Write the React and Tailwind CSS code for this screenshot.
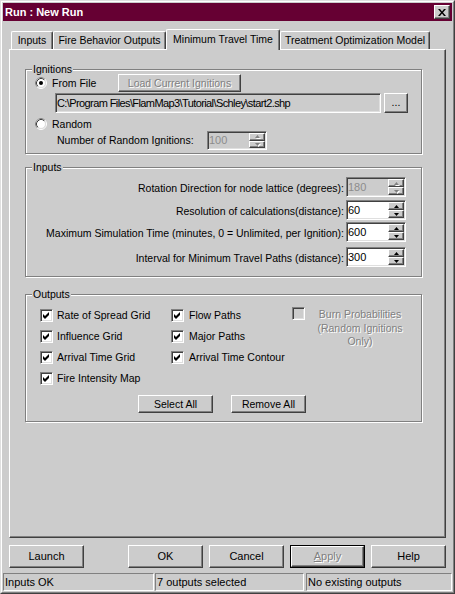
import React from 'react';

const raised =
  'border border-t-white border-l-white border-r-[#404040] border-b-[#404040] shadow-[inset_-1px_-1px_0_#808080]';
const sunken =
  'border border-t-[#808080] border-l-[#808080] border-r-white border-b-white shadow-[inset_1px_1px_0_#404040,inset_-1px_-1px_0_#dfdfdf]';
const etched = 'relative border border-[#808080] shadow-[inset_1px_1px_0_#ffffff,1px_1px_0_#ffffff]';
const embossed = 'text-[#808080] [text-shadow:1px_1px_0_#ffffff]';

const Button = ({ children, className = '', disabled }) => (
  <div className={`${raised} flex items-center justify-center shrink-0 ${disabled ? embossed : ''} ${className}`}>
    {children}
  </div>
);

const Radio = ({ checked }) => (
  <svg width="12" height="12" viewBox="0 0 12 12" className="shrink-0">
    <circle cx="6" cy="6" r="5.5" fill="none" stroke="#ffffff" />
    <path d="M2.11 9.89A5.5 5.5 0 0 1 9.89 2.11" fill="none" stroke="#808080" />
    <circle cx="6" cy="6" r="4.5" fill="#ffffff" stroke="#dfdfdf" />
    <path d="M2.82 9.18A4.5 4.5 0 0 1 9.18 2.82" fill="none" stroke="#404040" />
    {checked && <circle cx="6" cy="6" r="2" fill="#000000" />}
  </svg>
);

const Checkbox = ({ checked, disabled }) => (
  <div
    className={`${sunken} w-[13px] h-[13px] flex items-center justify-center shrink-0 ${
      disabled ? 'bg-[#cccccc]' : 'bg-white'
    }`}
  >
    {checked && (
      <svg width="7" height="7" viewBox="0 0 7 7">
        <path d="M0 2L2 4L6 0V3L2 7L0 5Z" fill="#000000" />
      </svg>
    )}
  </div>
);

const Arrow = ({ up, disabled }) => (
  <svg width="5" height="3" viewBox="0 0 5 3" className="overflow-visible">
    {disabled && <path d={up ? 'M3.5 1L6 4H1Z' : 'M1 1H6L3.5 4Z'} fill="#ffffff" />}
    <path d={up ? 'M2.5 0L5 3H0Z' : 'M0 0H5L2.5 3Z'} fill={disabled ? '#808080' : '#000000'} />
  </svg>
);

const SpinBox = ({ value, disabled, className = '' }) => (
  <div className={`${sunken} flex shrink-0 ${disabled ? 'bg-[#cccccc]' : 'bg-white'} ${className}`}>
    <div className={`flex-1 flex items-center pl-[1px] text-[11px] ${disabled ? 'text-[#8c8c8c]' : ''}`}>{value}</div>
    <div className="w-[16px] flex flex-col my-[1px] mr-[1px]">
      <div className={`${raised} flex-1 bg-[#cccccc] flex items-center justify-center`}>
        <Arrow up disabled={disabled} />
      </div>
      <div className={`${raised} flex-1 bg-[#cccccc] flex items-center justify-center`}>
        <Arrow disabled={disabled} />
      </div>
    </div>
  </div>
);

const Group = ({ title, className = '', children }) => (
  <div className={`${etched} ml-[15px] w-[397px] ${className}`}>
    <span className="absolute left-[6px] top-[-7px] px-[1px] bg-[#cccccc] leading-[13px]">{title}</span>
    {children}
  </div>
);

const Tab = ({ children, className = '', selected }) =>
  selected ? (
    <div
      className={`relative z-10 -mb-px h-[21px] bg-[#cccccc] border border-b-0 border-t-white border-l-white border-r-[#404040] shadow-[inset_-1px_0_0_#808080] rounded-t-[2px] flex items-center justify-center pb-[2px] shrink-0 whitespace-nowrap ${className}`}
    >
      {children}
    </div>
  ) : (
    <div
      className={`h-[18px] border border-b-0 border-t-white border-l-white border-r-[#404040] shadow-[inset_-1px_0_0_#808080] rounded-t-[2px] flex items-center justify-center shrink-0 whitespace-nowrap ${className}`}
    >
      {children}
    </div>
  );

const InputRow = ({ label, value, disabled, className = '' }) => (
  <div className={`flex items-center ${className}`}>
    <span className="w-[318px] text-right whitespace-nowrap pt-[2px]">{label}</span>
    <SpinBox value={value} disabled={disabled} className="ml-[2px] w-[60px] h-[20px]" />
  </div>
);

const CheckRow = ({ label, gap = 'ml-[4px]' }) => (
  <div className="h-[21px] flex items-center">
    <Checkbox checked />
    <span className={`${gap} whitespace-nowrap`}>{label}</span>
  </div>
);

const statusCell = 'border border-t-[#808080] border-l-[#808080] border-r-white border-b-white flex items-center pl-[1px] text-[11px]';

export default function App() {
  return (
    <div className="w-[455px] h-[594px] bg-[#cccccc] font-['Liberation_Sans',Arial,sans-serif] text-[10.5px] leading-[13px] text-black border border-t-[#dfdfdf] border-l-[#dfdfdf] border-r-[#404040] border-b-[#404040] select-none">
      <div className="h-full border border-t-white border-l-white border-r-[#808080] border-b-[#808080] p-[1px] flex flex-col">
        {/* Title bar */}
        <div className="h-[18px] bg-[#660033] flex items-center justify-between px-[2px] shrink-0">
          <span className="text-white font-bold text-[11px]">Run : New Run</span>
          <div className={`${raised} w-[16px] h-[14px] bg-[#cccccc] flex items-center justify-center`}>
            <svg width="8" height="7" viewBox="0 0 8 7">
              <path d="M0 0H2L4 2.4L6 0H8L5 3.5L8 7H6L4 4.6L2 7H0L3 3.5Z" fill="#000000" />
            </svg>
          </div>
        </div>

        {/* Tabs */}
        <div className="pl-[6px] pt-[8px]">
          <div className="flex items-end h-[20px] pl-[2px]">
            <Tab className="w-[42px]">Inputs</Tab>
            <Tab className="w-[113px]">Fire Behavior Outputs</Tab>
            <Tab selected className="w-[114px]">Minimum Travel Time</Tab>
            <Tab className="w-[150px]">Treatment Optimization Model</Tab>
          </div>

          <div className="w-[437px] h-[489px] border border-t-white border-l-white border-r-[#404040] border-b-[#404040] shadow-[inset_-1px_-1px_0_#808080] flex flex-col">
            {/* Ignitions */}
            <Group title="Ignitions" className="mt-[19px] h-[85px]">
              <div className="mt-[4px] h-[18px] flex items-center">
                <div className="w-[92px] flex items-center pl-[9px]">
                  <Radio checked />
                  <span className="ml-[5px]">From File</span>
                </div>
                <Button disabled className="w-[123px] h-[18px]">Load Current Ignitions</Button>
              </div>
              <div className="mt-[1px] flex">
                <div className={`${sunken} ml-[29px] w-[326px] h-[20px] flex items-center pl-[1px] whitespace-nowrap text-[11px] tracking-[-0.6px]`}>
                  {'C:\\Program Files\\FlamMap3\\Tutorial\\Schley\\start2.shp'}
                </div>
                <Button className="ml-[3px] w-[24px] h-[20px] pb-[2px]">...</Button>
              </div>
              <div className="mt-[5px] h-[12px] flex items-center pl-[9px]">
                <Radio />
                <span className="ml-[5px]">Random</span>
              </div>
              <div className="mt-[1px] flex items-center">
                <span className="ml-[31px] w-[150px] whitespace-nowrap">Number of Random Ignitions:</span>
                <SpinBox value="100" disabled className="w-[60px] h-[19px]" />
              </div>
            </Group>

            {/* Inputs */}
            <Group title="Inputs" className="mt-[13px] h-[110px]">
              <InputRow className="mt-[9px]" label="Rotation Direction for node lattice (degrees):" value="180" disabled />
              <InputRow className="mt-[3px]" label="Resolution of calculations(distance):" value="60" />
              <InputRow
                className="mt-[2px]"
                label="Maximum Simulation Time (minutes, 0 = Unlimited, per Ignition):"
                value="600"
              />
              <InputRow className="mt-[5px]" label="Interval for Minimum Travel Paths (distance):" value="300" />
            </Group>

            {/* Outputs */}
            <Group title="Outputs" className="mt-[17px] h-[128px]">
              <div className="mt-[10px] flex">
                <div className="ml-[14px] w-[131px]">
                  <CheckRow label="Rate of Spread Grid" />
                  <CheckRow label="Influence Grid" />
                  <CheckRow label="Arrival Time Grid" />
                  <CheckRow label="Fire Intensity Map" />
                </div>
                <div className="w-[121px]">
                  <CheckRow label="Flow Paths" gap="ml-[5px]" />
                  <CheckRow label="Major Paths" gap="ml-[5px]" />
                  <CheckRow label="Arrival Time Contour" gap="ml-[5px]" />
                </div>
                <div className="flex items-start">
                  <div className="mt-[2px]">
                    <Checkbox disabled />
                  </div>
                  <div className={`ml-[12px] mt-[3px] w-[86px] text-center leading-[13.5px] whitespace-nowrap ${embossed}`}>
                    Burn Probabilities
                    <br />
                    (Random Ignitions
                    <br />
                    Only)
                  </div>
                </div>
              </div>
              <div className="mt-[6px] flex">
                <Button className="ml-[112px] w-[75px] h-[18px]">Select All</Button>
                <Button className="ml-[18px] w-[75px] h-[18px]">Remove All</Button>
              </div>
            </Group>
          </div>
        </div>

        {/* Dialog buttons */}
        <div className="mt-[7px] h-[23px] flex pl-[6px] shrink-0 text-[11px]">
          <Button className="w-[75px] h-[23px]">Launch</Button>
          <Button className="ml-[44px] w-[75px] h-[23px]">OK</Button>
          <Button className="ml-[6px] w-[75px] h-[23px]">Cancel</Button>
          <div className="ml-[6px] w-[75px] h-[23px] border border-black flex">
            <Button disabled className="flex-1">
              <span>
                <span className="underline">A</span>pply
              </span>
            </Button>
          </div>
          <Button className="ml-[6px] w-[75px] h-[23px]">Help</Button>
        </div>

        {/* Status bar */}
        <div className="mt-[5px] h-[18px] flex shrink-0">
          <div className={`w-[151px] ${statusCell}`}>Inputs OK</div>
          <div className={`ml-[1px] w-[149px] ${statusCell}`}>7 outputs selected</div>
          <div className={`ml-[2px] w-[146px] ${statusCell}`}>No existing outputs</div>
        </div>
      </div>
    </div>
  );
}
